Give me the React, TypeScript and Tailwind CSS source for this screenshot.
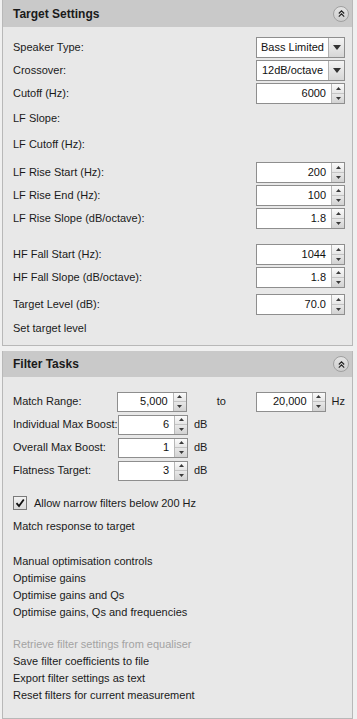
import React from "react";

const FONT = { fontFamily: '"Liberation Sans", Arial, sans-serif' };

function UpTri() {
  return (
    <svg width="5" height="3" viewBox="0 0 5 3" className="block">
      <path d="M0 3 L2.5 0 L5 3 Z" fill="#3a3a3a" />
    </svg>
  );
}
function DownTri() {
  return (
    <svg width="5" height="3" viewBox="0 0 5 3" className="block">
      <path d="M0 0 L5 0 L2.5 3 Z" fill="#3a3a3a" />
    </svg>
  );
}

function Spin({ value, wide }: { value: string; wide?: boolean }) {
  return (
    <div
      className={`flex border border-[#8e8e8e] bg-white ${
        wide ? "w-[89px] h-[21px]" : "w-[70px] h-[20px]"
      }`}
    >
      <div className="flex-1 flex items-center justify-end pr-[5px] text-[11px] text-[#111]">
        {value}
      </div>
      <div className="w-[13px] flex flex-col border-l border-[#b8b8b8]">
        <div className="flex-1 flex items-center justify-center bg-gradient-to-b from-[#fbfbfb] to-[#e6e6e6] border-b border-[#c4c4c4]">
          <UpTri />
        </div>
        <div className="flex-1 flex items-center justify-center bg-gradient-to-b from-[#e8e8e8] to-[#d2d2d2]">
          <DownTri />
        </div>
      </div>
    </div>
  );
}

function Combo({ value }: { value: string }) {
  return (
    <div className="flex w-[89px] h-[21px] border border-[#8e8e8e] bg-white">
      <div className="flex-1 flex items-center justify-center text-[11px] text-[#111]">
        {value}
      </div>
      <div className="w-[16px] flex items-center justify-center border-l border-[#b0b0b0] bg-gradient-to-b from-[#f4f4f4] to-[#d6d6d6]">
        <svg width="8" height="5" viewBox="0 0 8 5">
          <path d="M0 0 L8 0 L4 5 Z" fill="#333" />
        </svg>
      </div>
    </div>
  );
}

function Collapse() {
  return (
    <div className="w-[16px] h-[16px] rounded-full border border-[#a0a0a0] bg-gradient-to-b from-[#e4e4e4] to-[#cdcdcd] flex items-center justify-center">
      <svg width="9" height="9" viewBox="0 0 9 9">
        <path d="M1.8 4.5 L4.5 1.8 L7.2 4.5" fill="none" stroke="#222" strokeWidth="1.1" />
        <path d="M1.8 7.6 L4.5 4.9 L7.2 7.6" fill="none" stroke="#222" strokeWidth="1.1" />
      </svg>
    </div>
  );
}

function Header({ title, h }: { title: string; h: string }) {
  return (
    <div className={`${h} bg-[#c9c9c9] flex items-center justify-between pl-[10px] pr-[3px]`}>
      <span className="font-bold text-[12px] text-[#1a1a1a]">{title}</span>
      <Collapse />
    </div>
  );
}

function Row({ label, children }: { label: string; children?: React.ReactNode }) {
  return (
    <div className="h-[23px] flex items-center justify-between">
      <span>{label}</span>
      {children}
    </div>
  );
}

function TRow({ label, h }: { label: string; h: string }) {
  return <div className={`${h} flex items-center`}>{label}</div>;
}

function BoostRow({ label, value }: { label: string; value: string }) {
  return (
    <div className="h-[23px] flex items-center">
      <span className="w-[105px]">{label}</span>
      <Spin value={value} />
      <span className="ml-[6px]">dB</span>
    </div>
  );
}

export default function App() {
  return (
    <div className="w-[357px] h-[719px] bg-[#f0f0f0] text-[11px] text-[#1a1a1a]" style={FONT}>
      {/* Target Settings */}
      <div className="ml-[2px] w-[351px] border-x border-b border-[#b8b8b8] bg-[#e8e8e8]">
        <Header title="Target Settings" h="h-[27px]" />
        <div className="pl-[10px] pr-[7px] pt-[9px] pb-[4px]">
          <Row label="Speaker Type:">
            <Combo value="Bass Limited" />
          </Row>
          <Row label="Crossover:">
            <Combo value="12dB/octave" />
          </Row>
          <Row label="Cutoff (Hz):">
            <Spin value="6000" wide />
          </Row>
          <TRow label="LF Slope:" h="h-[27px]" />
          <TRow label="LF Cutoff (Hz):" h="h-[24px]" />
          <div className="h-[5px]" />
          <Row label="LF Rise Start (Hz):">
            <Spin value="200" wide />
          </Row>
          <Row label="LF Rise End (Hz):">
            <Spin value="100" wide />
          </Row>
          <Row label="LF Rise Slope (dB/octave):">
            <Spin value="1.8" wide />
          </Row>
          <div className="h-[13px]" />
          <Row label="HF Fall Start (Hz):">
            <Spin value="1044" wide />
          </Row>
          <Row label="HF Fall Slope (dB/octave):">
            <Spin value="1.8" wide />
          </Row>
          <div className="h-[4px]" />
          <Row label="Target Level (dB):">
            <Spin value="70.0" wide />
          </Row>
          <TRow label="Set target level" h="h-[25px]" />
        </div>
      </div>

      <div className="h-[5px]" />

      {/* Filter Tasks */}
      <div className="ml-[2px] w-[351px] border-x border-b border-[#b8b8b8] bg-[#e8e8e8]">
        <Header title="Filter Tasks" h="h-[26px]" />
        <div className="pl-[10px] pr-[7px] pt-[13px] pb-[14px]">
          <div className="h-[23px] flex items-center">
            <span className="w-[105px]">Match Range:</span>
            <Spin value="5,000" />
            <span className="w-[70px] text-center">to</span>
            <Spin value="20,000" />
            <span className="ml-[6px]">Hz</span>
          </div>
          <BoostRow label="Individual Max Boost:" value="6" />
          <BoostRow label="Overall Max Boost:" value="1" />
          <BoostRow label="Flatness Target:" value="3" />
          <div className="h-[10px]" />
          <div className="h-[22px] flex items-center">
            <div className="w-[14px] h-[14px] border border-[#7a7a7a] bg-gradient-to-b from-[#f2f2f2] to-[#dadada] flex items-center justify-center">
              <svg width="10" height="10" viewBox="0 0 10 10">
                <path d="M1.5 5.2 L4 8 L8.8 1.5" fill="none" stroke="#111" strokeWidth="1.8" />
              </svg>
            </div>
            <span className="ml-[7px]">Allow narrow filters below 200 Hz</span>
          </div>
          <TRow label="Match response to target" h="h-[24px]" />
          <div className="h-[15px]" />
          <TRow label="Manual optimisation controls" h="h-[17px]" />
          <TRow label="Optimise gains" h="h-[17px]" />
          <TRow label="Optimise gains and Qs" h="h-[17px]" />
          <TRow label="Optimise gains, Qs and frequencies" h="h-[17px]" />
          <div className="h-[15px]" />
          <div className="h-[17px] flex items-center text-[#a3a3a3]">
            Retrieve filter settings from equaliser
          </div>
          <TRow label="Save filter coefficients to file" h="h-[17px]" />
          <TRow label="Export filter settings as text" h="h-[17px]" />
          <TRow label="Reset filters for current measurement" h="h-[17px]" />
        </div>
      </div>
    </div>
  );
}
